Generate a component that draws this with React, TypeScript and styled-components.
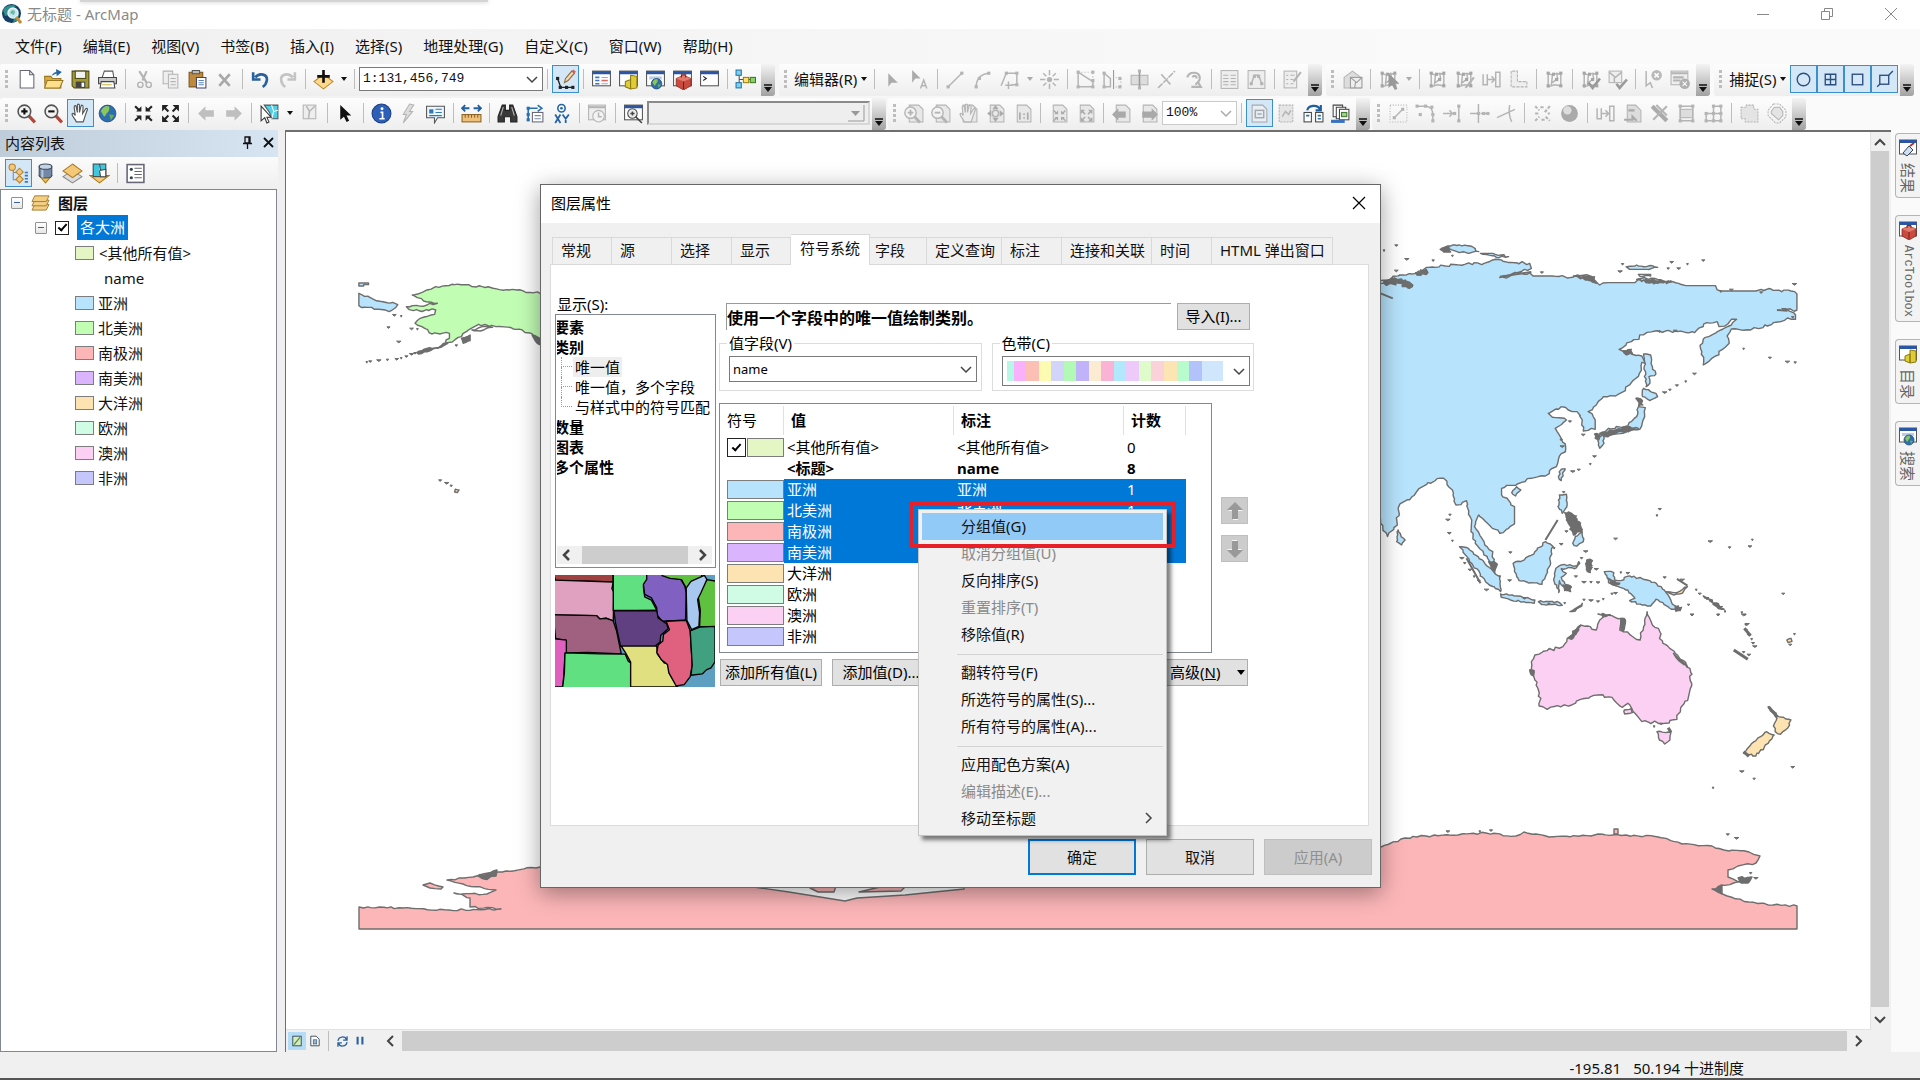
import React from "react";
import styled, { createGlobalStyle, css } from "styled-components";

const UI_FONT = `"Noto Sans", "Noto Sans CJK SC", sans-serif`;
const CJK_FONT = `"Noto Sans CJK SC", sans-serif`;
const MONO_FONT = `"Liberation Mono", "Noto Sans CJK SC", monospace`;

const C = {
  face: "#f0f0f0",
  edge: "#828790",
  line: "#dcdcdc",
  select: "#0078d7",
  text: "#111111",
  coast: "#6e6e6e",
  asia: "#b7e3fc",
  namerica: "#c2fdb4",
  antarctica: "#fcb6b8",
  samerica: "#dab4fc",
  oceania: "#fce3b1",
  europe: "#d0fce5",
  australia: "#fcd0f2",
  africa: "#c4c6fc",
  other: "#e3f6c3",
};

const GlobalStyle = createGlobalStyle`
  *, *::before, *::after { box-sizing: border-box; }
  body { margin: 0; background: ${C.face}; }
  button, input, select { font: inherit; color: inherit; margin: 0; }
  ul { list-style: none; margin: 0; padding: 0; }
`;

/* ---------- icons ---------- */

const G = "#b4b4b4";
const g = { stroke: G, fill: "none", strokeWidth: 1.4 };
const node = (pts: number[][], color = G) =>
  pts.map(([x, y], i) => <rect key={i} x={x - 1.5} y={y - 1.5} width="3" height="3" fill={color} stroke="none" />);
const page = (
  <path d="M5 2h9l4 4v12H5z" fill="#e8e8e8" stroke={G} />
);
const win = (
  <>
    <rect x="1.5" y="2" width="17" height="14" fill="#fff" stroke="#555" />
    <rect x="1.5" y="2" width="17" height="3" fill="#2b56a3" />
  </>
);
const lens = (c: string, handle: string, plus: boolean) => (
  <>
    <path d="M12 12l6 6.5" stroke={handle} strokeWidth="3" />
    <circle cx="8" cy="8" r="6" fill="#f3f3f3" stroke={c} strokeWidth="1.5" />
    <path d={plus ? "M5 8h6M8 5v6" : "M5 8h6"} stroke={c === G ? G : "#111"} strokeWidth="2" />
  </>
);
const globe = (cx: number, cy: number, r: number) => (
  <>
    <circle cx={cx} cy={cy} r={r} fill="#2c6fae" stroke="#274e78" strokeWidth=".8" />
    <path
      d={`M${cx - r * 0.8} ${cy - r * 0.3}q${r * 0.5} ${-r * 0.8} ${r} ${-r * 0.5}q${r * 0.1} ${r * 0.5} ${-r * 0.3} ${r * 0.8}q${-r * 0.3} ${r * 0.6} ${-r * 0.4} ${r * 0.2}z`}
      fill="#8cc65a"
    />
    <path d={`M${cx + r * 0.2} ${cy + r * 0.1}l${r * 0.6} ${r * 0.1}l${-r * 0.4} ${r * 0.6}z`} fill="#6fb04a" />
  </>
);
const hand = (c: string, f: string) => (
  <path
    d="M6 18c-1-3-4-5-4-7s2-1 3 1L4 4c0-2 2-2 2 0l1 5V2.500c0-2 2-2 2 0V9l1.500-6c.5-1.500 2-1 2 .5L12 10l3-4.500c1-1 2 0 1.500 1L14.500 12c-1 3-1 4-2 6z"
    fill={f}
    stroke={c}
    strokeWidth="1.100"
  />
);
const arrowsIn = (c: string) => (
  <g fill={c} stroke={c}>
    <path d="M2 3l4 4M18 3l-4 4M2 17l4-4M18 17l-4-4" strokeWidth="2" />
    <path d="M8 3v5H3zM12 3v5h5zM8 17v-5H3zM12 17v-5h5z" stroke="none" />
  </g>
);
const arrowsOut = (c: string) => (
  <g fill={c} stroke={c}>
    <path d="M4 4l4 4M16 4l-4 4M4 16l4-4M16 16l-4-4" strokeWidth="2" />
    <path d="M2 2h6L2 8zM18 2h-6l6 6zM2 18h6l-6-6zM18 18h-6l6-6z" stroke="none" />
  </g>
);
const cursor = (c: string, x = 0, y = 0) => (
  <path transform={`translate(${x} ${y})`} d="M5 2v14l3.500-3 2.500 5 2.500-1.200L11 12h4.500z" fill={c} />
);
const poly = (
  <>
    <path d="M4 4l4 2 4-2 4 1v11l-6-1-6 2zM8 6l-1 10M12 4l1 5-5 4" {...g} />
    {node([[4, 4], [16, 4], [4, 16], [16, 16], [9, 5], [12, 10]], "#a6a6a6")}
  </>
);

const ICONS: Record<string, React.ReactNode> = {
  new: <path d="M4 1.500h9l4 4V18H4zM13 1.500v4h4" fill="#fff" stroke="#667" />,
  open: (
    <>
      <path d="M1.500 7h6l1.500 2h8v9h-15z" fill="#d9a93b" stroke="#9a7722" />
      <path d="M4 11h15l-3 7H1.500z" fill="#ffe08a" stroke="#9a7722" />
      <path d="M9 6c1-2 3-3 6-3M13 1l4 2-3.500 3z" stroke="#2464a4" fill="#2464a4" />
    </>
  ),
  save: (
    <>
      <path d="M2 2h16v16H4l-2-2z" fill="#a39a35" stroke="#4c4817" />
      <rect x="5" y="2" width="10" height="7" fill="#f2f2f2" stroke="#4c4817" />
      <rect x="5.500" y="12" width="9" height="6" fill="#444" />
      <rect x="11" y="13" width="2.500" height="4" fill="#fff" />
    </>
  ),
  print: (
    <>
      <path d="M5 8l2-6h8l1 6" fill="#fff" stroke="#555" />
      <path d="M1.500 8h17v6h-17z" fill="#c9c9c9" stroke="#444" />
      <path d="M4 12h12l1 6H3z" fill="#fff" stroke="#444" />
      <path d="M5 15h9" stroke="#cdb53f" />
    </>
  ),
  cut: <g {...g}><path d="M6 2l7 11M13 2L9 11" strokeWidth="2" /><circle cx="7" cy="15" r="2.500" /><circle cx="15" cy="15" r="2.500" /></g>,
  copy: <><path d="M3 2h9v12H3z" fill="#eee" stroke={G} /><path d="M8 5h9v13H8zM10 9h5M10 12h5M10 15h5" fill="#eee" stroke={G} /></>,
  paste: (
    <>
      <path d="M2 3h13v14H2z" fill="#c08a3e" stroke="#7a5520" />
      <path d="M5 1.500h7v3H5z" fill="#bbb" stroke="#555" />
      <path d="M9 8h9v10H9z" fill="#fff" stroke="#446" />
      <path d="M11 11h5M11 13h5M11 15h5" stroke="#5a87c4" />
    </>
  ),
  del: <path d="M5 5l10 11M15 5L5 16" stroke="#a9a9a9" strokeWidth="2.500" />,
  undo: <path d="M5 8c4-5 12-3 11 3-.5 3-2 5-4 6M3 3v7h7" stroke="#2a609c" strokeWidth="2.500" fill="none" />,
  redo: <path d="M15 8C11 3 3 5 4 11c.5 3 2 5 4 6M17 3v7h-7" stroke="#c4c4c4" strokeWidth="2.500" fill="none" />,
  add: (
    <>
      <path d="M10 5l9 7-9 7-9-7z" fill="#ffd98a" stroke="#b98a33" />
      <path d="M10 1v12M4 7h12" stroke="#111" strokeWidth="2.500" />
    </>
  ),
  sketch: (
    <>
      <path d="M2.500 9l3 8.500h11" stroke="#222" strokeWidth="1.300" fill="none" />
      {node([[2.500, 9], [5, 17.500], [11, 17.500], [17, 17.500]], "#222")}
      <path d="M9 13l1-4 6-7 2.500 2-6 7z" fill="#f1d7b3" stroke="#8c6a3c" />
      <path d="M16 2l1.500-1.500L20 2.500 18.500 4z" fill="#d86060" />
    </>
  ),
  table: <>{win}<path d="M4 8h4M4 11h4M4 14h4" stroke="#3a76c6" strokeWidth="1.500" /><path d="M10 8h6M10 14h6" stroke="#9ab" /><path d="M10 11h6" stroke="#d66" strokeWidth="1.500" /></>,
  catalog: <>{win}<path d="M7 12l5-2v9l-5-2zM12 6l6 1v11l-6 1z" fill="#e0cc34" stroke="#8a7a12" /></>,
  search: <>{win}<rect x="4" y="7" width="12" height="3" fill="#b9cde8" />{globe(11, 14, 5)}</>,
  toolbox: <>{win}<path d="M4 9l7-3 7 3v7l-7 4-7-4z" fill="#c94a3e" stroke="#7d1d17" strokeWidth=".7" /><path d="M4 9l7 3 7-3-7-3z" fill="#e27a6c" /><path d="M11 12v7M9 8V5.500h4V8" stroke="#7d1d17" fill="none" /></>,
  python: <>{win}<path d="M4 7l3 2-3 2" stroke="#222" fill="none" /></>,
  model: (
    <>
      <path d="M4 4v12M4 10h11" stroke="#555" />
      <rect x="1" y="1" width="5" height="5" fill="#7fd0f0" stroke="#1e76a8" />
      <rect x="1" y="13" width="5" height="5" fill="#7fd0f0" stroke="#1e76a8" />
      <rect x="8" y="8" width="5" height="5" fill="#ffe16a" stroke="#97801b" />
      <rect x="14.500" y="8" width="5" height="5" fill="#8bd16b" stroke="#3b7b20" />
    </>
  ),
  play: <path d="M6 4v13l3-4h6z" fill="#ababab" />,
  playA: <><path d="M3 1v12l3-4h5z" fill="#ababab" /><path d="M11 18.500l3-8 3 8M12 16h4" {...g} /></>,
  lineSeg: <><path d="M3 17L16 4" {...g} />{node([[3, 17], [16, 4]])}</>,
  arc: <><path d="M4 17C4 9 8 5 16 4" {...g} />{node([[4, 17], [7, 9], [16, 4]])}</>,
  trace: <><path d="M2 16l5-12h10v11H12" {...g} /><path d="M9 12v7M6 15.500h7" {...g} />{node([[7, 4], [17, 4], [17, 15]])}</>,
  burst: <><path d="M10 1v5M10 14v5M1 10h5M14 10h5M4 4l3 3M13 13l3 3M16 4l-3 3M7 13l-3 3" {...g} /><circle cx="10" cy="10" r="2.500" fill={G} /></>,
  reshape: <><path d="M3 3h14v14" stroke={G} strokeDasharray="1 2" fill="none" /><path d="M3 3v14h14v-5L3 3" {...g} />{node([[3, 3], [3, 17], [17, 17], [17, 11], [17, 3]])}</>,
  cutPoly: <><path d="M2 4v13h6V9L2 4" {...g} /><path d="M11 1v18" stroke="#999" /><path d="M13 8h5v9h-5" stroke={G} strokeDasharray="1 2" fill="none" />{node([[2, 4], [2, 17], [17, 9], [17, 17]])}</>,
  split: <><rect x="2" y="6" width="16" height="9" fill="#ddd" stroke={G} /><path d="M10 1v18" stroke="#999" strokeWidth="1.500" />{node([[10, 2], [10, 18]])}</>,
  splitX: <path d="M2 18L18 2M5 5l9 10" stroke={G} strokeWidth="1.500" strokeDasharray="6 1" />,
  rotate: <path d="M4 8c2-6 12-6 12 1 0 3-3 4-4 6M9 8c1-2 4-2 4 1M8 17h9l-3-5" stroke={G} strokeWidth="2" fill="none" />,
  attrs: <><rect x="2" y="1.500" width="16" height="17" fill="#eee" stroke={G} /><path d="M4 6h5M4 9h5M4 12h5M4 15h5M11 6h5M11 9h5M11 12h5M11 15h5" stroke={G} /></>,
  props: <><rect x="2" y="1.500" width="16" height="17" fill="#eee" stroke={G} /><path d="M5 14l3-8h4l3 8" {...g} />{node([[5, 14], [8, 7], [12, 7], [15, 14]])}</>,
  form: <><rect x="2" y="2" width="12" height="16" fill="#eee" stroke={G} /><path d="M4 6h2M4 10h2M4 14h2M8 6h4M8 10h3M8 14h3" stroke={G} /><path d="M18 3l-7 9" stroke={G} strokeWidth="2" /></>,
  building: <><path d="M2 8l8-6 8 6v10H2z" fill="#ddd" stroke={G} /><rect x="8" y="8" width="11" height="10" fill="#eee" stroke="#999" /><path d="M8 8l6 5 5-5M13 12l-1 6" stroke="#999" fill="none" /></>,
  polyCursor: <>{poly}{cursor("#999", 5, 2)}</>,
  poly,
  polyEdit: <>{poly}<path d="M19 8l-8 10" stroke={G} strokeWidth="2" /></>,
  align: <><path d="M2 5v10h4V5M14 3h4v14h-4z" {...g} /><path d="M6 10h7M10 7l3 3-3 3" {...g} /></>,
  steps: <><path d="M3 2v15h15v-5H9V2z" fill="#eee" stroke={G} strokeDasharray="3 1" /></>,
  polyCheck: <>{poly}<path d="M8 13l4 5 7-9" stroke="#9a9a9a" strokeWidth="2.500" fill="none" /></>,
  boxCheck: <><rect x="2" y="2" width="12" height="11" fill="#eee" stroke={G} /><path d="M2 3l6 5 6-5M7 8v5" {...g} /><path d="M9 14l3 4 7-8" stroke="#9a9a9a" strokeWidth="2.500" fill="none" /></>,
  cursorX: <><path d="M3 2v14l4-3 2 5" {...g} /><circle cx="13" cy="6" r="5" fill="#b9b9b9" /><path d="M11 4l4 4M15 4l-4 4" stroke="#fff" strokeWidth="1.500" /></>,
  listX: <><rect x="1" y="2" width="16" height="13" fill="#eee" stroke={G} /><path d="M1 4h16M3 8h10M3 11h7" stroke={G} strokeWidth="2" /><circle cx="14" cy="14" r="5" fill="#b0b0b0" /><path d="M12 12l4 4M16 12l-4 4" stroke="#fff" /></>,
  zoomIn: lens("#555", "#b0483a", true),
  zoomOut: lens("#555", "#b0483a", false),
  hand: hand("#555", "#fff"),
  globe: globe(10, 10, 8),
  arrowsIn: arrowsIn("#222"),
  arrowsOut: arrowsOut("#222"),
  back: <path d="M2 10l7-7v4h8v6H9v4z" fill="#bfbfbf" />,
  fwd: <path d="M18 10l-7-7v4H3v6h8v4z" fill="#bfbfbf" />,
  selFeat: <><path d="M5 2h13v13h-6l-2-6z" fill="#4fd0e6" stroke="#555" /><path d="M12 2l2 6 4-1M12 15l2-7" stroke="#fff" fill="none" /><path d="M2 3v14l3.500-3 2 5 2-1-2-4.500h4z" fill="#fff" stroke="#333" /></>,
  clearSel: <><rect x="4" y="2" width="12" height="13" fill="#eee" stroke={G} /><path d="M7 3l3 5 5-5M10 8l-1 7" {...g} /></>,
  cursor: cursor("#111"),
  info: <><circle cx="10" cy="10" r="9" fill="#2d5fb8" stroke="#1d3f80" /><path d="M9 9h2v6M8 15h5" stroke="#fff" strokeWidth="1.600" fill="none" /><circle cx="10.500" cy="5.500" r="1.400" fill="#fff" /></>,
  flash: <path d="M11 1l4 1-4 6h3L5 19l3-8H5z" fill="#ddd" stroke={G} />,
  popup: <><path d="M1.500 3h17v11H12l-3 5v-5H1.500z" fill="#eef6fd" stroke="#555" /><rect x="4" y="6" width="4" height="4" fill="#2f77b6" /><path d="M10 6h6M10 9h6M4 12h12" stroke="#2f77b6" /></>,
  measure: <><rect x="1" y="11" width="18" height="7" fill="#f0c07a" stroke="#8a6325" /><path d="M4 11v3M7 11v3M10 11v3M13 11v3M16 11v3" stroke="#8a6325" /><path d="M2 5h6M12 5h6M4 2L1 5l3 3M16 2l3 3-3 3" stroke="#1f5fa0" strokeWidth="1.700" fill="none" /></>,
  find: <><path d="M5 2h3v5h4V2h3l4 11v5h-6v-5H7v5H1v-5z" fill="#3a3a3a" stroke="#222" /><path d="M3.500 12L6 4M16.500 12L14 4" stroke="#bbb" /></>,
  route: <><rect x="8" y="9" width="10" height="9" fill="#fff" stroke="#667" /><path d="M10 12h6M10 15h6" stroke="#78a" /><path d="M4 16V5h9M13 2l4 3-4 3" stroke="#2970b0" fill="none" strokeWidth="1.500" />{node([[4, 5], [4, 11], [4, 16]], "#2970b0")}</>,
  xy: <><circle cx="10" cy="5" r="3.500" fill="none" stroke="#2463a5" strokeWidth="1.500" /><circle cx="10" cy="5" r="1.300" fill="#2463a5" /><path d="M4 11l5 8M9 11l-5 8M11 11l3 4 3-4M14 15v4" stroke="#2463a5" strokeWidth="1.700" fill="none" /></>,
  time: <><rect x="1.500" y="2" width="16" height="14" fill="#eee" stroke={G} /><path d="M1.500 4h16" stroke={G} strokeWidth="2" /><circle cx="11" cy="12.500" r="5.500" fill="#f3f3f3" stroke={G} /><path d="M11 9v4h3" {...g} /></>,
  viewer: <>{win}<circle cx="9" cy="10" r="4.500" fill="#eee" stroke="#444" /><path d="M7 10h4M9 8v4M12 13l6 6" stroke="#444" strokeWidth="1.500" /></>,
  pzIn: <>{page}<g transform="translate(-1 2) scale(.9)">{lens(G, G, true)}</g></>,
  pzOut: <>{page}<g transform="translate(-1 2) scale(.9)">{lens(G, G, false)}</g></>,
  pHand: <>{page}{hand(G, "#eee")}</>,
  pFull: <>{page}<path d="M10 2l3 4H7zM10 18l3-4H7zM2 10l4-3v6zM18 10l-4-3v6z" fill="#aaa" /><circle cx="10" cy="10" r="3" {...g} /></>,
  pOne: <>{page}<path d="M7.500 9v7M15 9v7M11.500 10v1.500M11.500 13.500V15" stroke="#aaa" strokeWidth="1.600" /></>,
  pIn: <>{page}<g transform="translate(4 5) scale(.7)">{arrowsIn("#aaa")}</g></>,
  pOut: <>{page}<g transform="translate(4 5) scale(.7)">{arrowsOut("#aaa")}</g></>,
  pBack: <>{page}<path d="M1 11l6-6v3h7v6H7v3z" fill="#a9a9a9" /></>,
  pFwd: <>{page}<path d="M19 11l-6-6v3H4v6h9v3z" fill="#a9a9a9" /></>,
  draft: <><path d="M3 2h10l4 4v12H3z" fill="#e8eef3" stroke="#a4a9ad" /><rect x="6" y="7" width="8" height="7" stroke="#a4a9ad" strokeWidth="1.400" /><path d="M8 10.500h4" stroke="#a4a9ad" strokeWidth="1.400" /></>,
  pFocus: <><rect x="3" y="2" width="13" height="16" fill="#e5e5e5" stroke={G} strokeDasharray="2 1" /><path d="M6 13l3-5 3 3 2-4" {...g} /></>,
  swap: <><rect x="1" y="9" width="7" height="9" fill="#fff" stroke="#444" /><rect x="12" y="9" width="7" height="9" fill="#fff" stroke="#444" /><path d="M3 12h3M14 12h3M14 15h3" stroke="#2970b0" strokeWidth="1.500" /><path d="M4 7c1-5 10-6 12-1M17 2v5h-5" stroke="#1f5fa0" strokeWidth="2" fill="none" /></>,
  pages: <><path d="M3 2h9v11H3z" fill="#fff" stroke="#444" /><path d="M6 4h9v11H6z" fill="#fff" stroke="#444" /><rect x="9" y="6" width="9" height="10" fill="#fff" stroke="#444" /><rect x="11" y="9" width="5" height="4" fill="#9fd08a" stroke="#3c7a2c" /><path d="M1 16h13v3H1z" fill="#3a72c0" /></>,
  eBox: <><rect x="2" y="2" width="16" height="16" stroke={G} strokeDasharray="1 1.500" fill="none" /><path d="M6 14l8-8" {...g} />{node([[6, 14], [14, 6]])}</>,
  eCurve: <><path d="M2 3h8M10 3c5 0 7 4 7 8v7" {...g} />{node([[2, 3], [10, 3], [16, 4], [17, 11], [17, 17], [5, 11]])}</>,
  eExtend: <><path d="M1 10h9M7 7l3 3-3 3M16 2v16" {...g} />{node([[12, 10], [16, 3], [16, 17]])}</>,
  eTrim: <><path d="M9 1v18M1 10h8M11 10h8" {...g} />{node([[9, 10], [14, 10], [18, 10]])}</>,
  eCross: <path d="M1 14l17-8M13 2c-1 6-1 10 2 16" {...g} />,
  eExplode: <><path d="M3 3l4 4M17 3l-5 6M3 17l4-4M13 13l4 4M8 4h3M3 10h3M15 10h2M9 16h3" stroke={G} strokeDasharray="3 1.500" strokeWidth="2" /></>,
  eBall: <><circle cx="10" cy="10" r="8" fill="#aaa" /><circle cx="8" cy="7" r="4" fill="#ddd" /></>,
  ePage: <><path d="M5 2h8l5 5v11H5z" fill="#ddd" stroke={G} /><path d="M2 16h8v-3l4 4M12 7H6" stroke="#aaa" strokeWidth="2" fill="none" /></>,
  eWrench: <><path d="M3 3l14 14" stroke="#aaa" strokeWidth="4" /><path d="M17 3L4 16M7 2l10 10" stroke="#b4b4b4" strokeWidth="2" /></>,
  eBand: <><rect x="4" y="6" width="12" height="8" fill="#ddd" stroke={G} /><path d="M4 2v16M16 2v16M4 3h12M4 17h12" {...g} />{node([[4, 3], [16, 3], [4, 17], [16, 17]])}</>,
  eGrid: <><path d="M10 2v16M17 2v16M10 3h7M2 10h15M2 17h15M3 10v7" {...g} />{node([[10, 3], [17, 3], [3, 10], [10, 10], [17, 10], [3, 17], [10, 17], [17, 17]])}</>,
  eUnion: <path d="M2 4h5V2h7v4h4v12H6v-3H2z" fill="#e4e4e4" stroke={G} strokeDasharray="2 1" />,
  eBuffer: <><path d="M7 1h6l6 6v6l-6 6H9l-7-7V7z" stroke={G} strokeDasharray="2 1" fill="none" /><path d="M8 4h5l3 4v4l-4 4-7-6V8z" fill="#e4e4e4" stroke={G} /></>,
  snapPoint: <circle cx="10" cy="10" r="6" fill="none" stroke="#2c4f82" strokeWidth="1.300" />,
  snapEnd: <path d="M5 5h10v10H5zM5 10h10M10 5v10" fill="none" stroke="#2c4f82" strokeWidth="1.300" />,
  snapVertex: <rect x="5" y="5" width="10" height="10" fill="none" stroke="#2c4f82" strokeWidth="1.300" />,
  snapEdge: <><path d="M3 17l3-3M14 6l4-4" stroke="#2c4f82" strokeWidth="1.300" /><rect x="5.500" y="6" width="8.500" height="8.500" fill="none" stroke="#2c4f82" strokeWidth="1.300" /></>,
  tocOrder: (
    <>
      <path d="M5 7v9h6M5 9h6" stroke="#889" fill="none" />
      <circle cx="4" cy="4" r="3" fill="#f3c87e" stroke="#b5812c" />
      <path d="M11 5l3.500 3.500L11 12 7.500 8.500zM11 12l3.500 3.500L11 19l-3.500-3.500z" fill="#f3c87e" stroke="#b5812c" />
      <path d="M16 9h3M16 12h3M16 15h3M16 18h3" stroke="#357ac0" strokeWidth="1.500" />
    </>
  ),
  tocSource: <><path d="M4 12h12l-6 7z" fill="#f4c24e" stroke="#a87b1c" /><path d="M4 3v9c0 3 12 3 12 0V3z" fill="#7288a6" stroke="#3d4d63" /><path d="M6 5v9h2V5z" fill="#b9c7da" /><ellipse cx="10" cy="3.500" rx="6" ry="2.500" fill="#c5d2e2" stroke="#3d4d63" /></>,
  tocVisible: <><path d="M10 7l9 6-9 6-9-6z" fill="#ddd" stroke="#888" /><path d="M10 1l9 6.500-9 6.500-9-6.500z" fill="#f4c878" stroke="#a87b1c" /></>,
  tocSelect: <><path d="M1 12h18l-9 7z" fill="#f4c878" stroke="#a87b1c" /><rect x="4" y="1" width="12" height="12" fill="#3ec8e0" stroke="#444" /><path d="M10 1l1 6 5-1v7h-5l-1-6" fill="#fff" stroke="#444" /></>,
  tocOptions: <><rect x="2" y="1.500" width="16" height="17" fill="#fff" stroke="#667" strokeWidth="1.500" /><path d="M9 5h7M9 8h7M9 14h7M9 11h7" stroke="#667" /><circle cx="6" cy="6" r="1.500" fill="#345" /><circle cx="6" cy="14" r="1.500" fill="#345" /></>,
  layers: <g fill="#f3cf85" stroke="#a77c2c"><path d="M4 12h15l-3 6H1z" /><path d="M4 7.500h15l-3 6H1z" /><path d="M4 3h15l-3 6H1z" /></g>,
  results: <>{win}<path d="M5 15l6-7 4 4-6 6z" fill="#cfe0f5" stroke="#345" /><path d="M12 8l4-3" stroke="#a33" strokeWidth="2" /></>,
  logo: (
    <>
      <circle cx="9.500" cy="9.500" r="9.500" fill="#123f63" />
      <path d="M1 6c3-5 9-6 13-4l-4 3-3 6-4 1zM12 14l5-4-1 6-5 3z" fill="#2f8f8b" />
      <circle cx="11" cy="9" r="5" fill="#bfe6f2" stroke="#e9f3f5" strokeWidth="1.500" />
      <path d="M8 9l2-3 3 1-1 4z" fill="#6db7a0" />
      <path d="M14 13l5 6" stroke="#c98c35" strokeWidth="3" />
    </>
  ),
  dataView: <><rect x="3" y="2" width="14" height="16" fill="#d6ecc0" stroke="#345" strokeWidth="1.500" /><path d="M5 16L15 4" stroke="#4a8a3a" strokeWidth="2" /></>,
  layoutView: <><path d="M3 2h9l5 5v11H3z" fill="#fff" stroke="#345" strokeWidth="1.500" /><rect x="7" y="8" width="6" height="7" fill="#8fb5dc" stroke="#345" /></>,
  refresh: <path d="M3 9c1-7 11-8 13-2M17 2v6h-6M17 11c-1 7-11 8-13 2M3 18v-6h6" stroke="#2a609c" strokeWidth="2" fill="none" />,
  pause: <path d="M6 3v13M14 3v13" stroke="#2a609c" strokeWidth="3.500" />,
};

const Svg = styled.svg<{ $s: number }>`
  display: block;
  flex: none;
  width: ${(p) => p.$s}px;
  height: ${(p) => p.$s}px;
  fill: none;
`;
const Icon = ({ name, size = 21 }: { name: string; size?: number }) => (
  <Svg $s={size} viewBox="0 0 20 20" aria-hidden="true">{ICONS[name]}</Svg>
);
const Chevron = ({ dir = "down", size = 12, width = 1.5, color = "#444" }: { dir?: string; size?: number; width?: number; color?: string }) => {
  const d: Record<string, string> = { down: "M1 4l5 5 5-5", up: "M1 8l5-5 5 5", left: "M8 1L3 6l5 5", right: "M4 1l5 5-5 5" };
  return <Svg $s={size} viewBox="0 0 12 12" aria-hidden="true"><path d={d[dir]} stroke={color} strokeWidth={width} /></Svg>;
};

/* ---------- window frame ---------- */

const Window = styled.div`
  position: relative;
  display: flex;
  flex-direction: column;
  height: 100vh;
  overflow: hidden;
  background: linear-gradient(90deg, #f0f0f0, #fafafa 75%);
  color: ${C.text};
  font: 15px/20px ${UI_FONT};
`;
const TitleBar = styled.header`
  display: flex;
  align-items: center;
  height: 29px;
  padding: 0 0 2px 2px;
  gap: 5px;
  background: #fff;
  color: #8a8a8a;
`;
const HiddenEdge = styled.div`
  position: absolute;
  top: 0;
  left: 80px;
  width: 408px;
  height: 2px;
  background: #d4d4d4;
  box-shadow: 0 0 4px #bbb;
`;
const WindowTitle = styled.h1`
  flex: 1;
  margin: 0;
  font: 15px/20px ${UI_FONT};
`;
const CaptionButton = styled.button`
  display: grid;
  place-items: center;
  width: 59px;
  height: 27px;
  padding: 0;
  border: 0;
  background: none;
`;
const MenuBar = styled.nav`
  display: flex;
  gap: 1px;
  height: 35px;
  padding: 0 0 2px 5px;
`;
const MenuEntry = styled.button`
  padding: 0 10px;
  border: 0;
  background: none;
  white-space: nowrap;
`;

/* ---------- toolbars ---------- */

const ToolRow = styled.div`
  display: flex;
  gap: 4px;
  height: 32px;
  margin-bottom: 2px;
`;
const ToolRowLast = styled(ToolRow)`
  gap: 2px;
  margin-bottom: 0;
`;
const Bar = styled.div`
  display: flex;
  flex: none;
  align-items: center;
  height: 32px;
  padding-bottom: 2px;
  border-radius: 3px;
  background: linear-gradient(#fdfdfd, #eeeeee);
`;
const Grip = styled.span`
  width: 3px;
  height: 18px;
  margin: 0 5px;
  background: repeating-linear-gradient(#bdbdbd 0 3px, transparent 3px 5px);
`;
const ToolButton = styled.button<{ $on?: boolean }>`
  display: grid;
  place-items: center;
  flex: none;
  width: 27px;
  height: 28px;
  padding: 0;
  border: 1px solid transparent;
  background: none;
  ${(p) => p.$on && css`
    border-color: #3c8fc9;
    background: #d3e7f6;
  `}
`;
const Sep = styled.span`
  flex: none;
  width: 1px;
  height: 20px;
  margin: 0 4px;
  background: #bdbdbd;
`;
const DropArrow = styled.button<{ $dim?: boolean }>`
  flex: none;
  width: 13px;
  height: 28px;
  padding: 0;
  border: 0;
  background: none;
  &::after {
    content: "";
    display: block;
    width: 0;
    margin: 0 auto;
    border: 3px solid transparent;
    border-top: 4px solid ${(p) => (p.$dim ? "#aaa" : "#111")};
    border-bottom: 0;
  }
`;
const BarMenu = styled.button`
  padding: 0 0 0 2px;
  border: 0;
  background: none;
  white-space: nowrap;
`;
const Overflow = styled.button`
  display: grid;
  place-items: end center;
  width: 14px;
  height: 32px;
  margin: 0 0 -2px 2px;
  padding: 0 0 4px;
  border: 0;
  border-radius: 0 3px 3px 0;
  background: linear-gradient(#f4f4f4, #a2a2a2);
`;
const OverflowGlyph = () => (
  <Overflow aria-label="工具条选项">
    <svg width="8" height="8" viewBox="0 0 8 8"><path d="M0 1h8" stroke="#111" strokeWidth="1.500" /><path d="M0 3h8L4 8z" fill="#111" /></svg>
  </Overflow>
);

const ComboBox = styled.div<{ $w: number; $h: number }>`
  display: grid;
  flex: none;
  align-items: center;
  width: ${(p) => p.$w}px;
  height: ${(p) => p.$h}px;
  > * { grid-area: 1 / 1; }
  > svg { justify-self: end; margin-right: 5px; pointer-events: none; }
`;
const Select = styled.select<{ $mono?: boolean; $tone?: string }>`
  appearance: none;
  width: 100%;
  height: 100%;
  padding: 0 20px 0 3px;
  border: 1px solid ${(p) => p.$tone ?? "#7a7a7a"};
  border-radius: 0;
  background: #fff;
  opacity: 1;
  font: 13px/20px ${(p) => (p.$mono ? MONO_FONT : UI_FONT)};
`;
const SunkenSelect = styled(Select)`
  border-width: 2px;
  border-color: #8a8a8a #d8d8d8 #d8d8d8 #8a8a8a;
  background: #eeeeee;
`;

const Tools = ({ items, active = [] }: { items: string; active?: string[] }) => (
  <>
    {items.split(" ").map((n, i) =>
      n === "|" ? <Sep key={i} /> : n === "v" ? <DropArrow key={i} aria-label="更多" /> : n === "w" ? <DropArrow key={i} $dim aria-label="更多" /> : (
        <ToolButton key={i} $on={active.includes(n)} aria-label={n}><Icon name={n} /></ToolButton>
      )
    )}
  </>
);

/* ---------- contents panel ---------- */

const Main = styled.main`
  display: flex;
  flex: 1;
  min-height: 0;
  background: ${C.face};
`;
const Panel = styled.aside`
  display: flex;
  flex-direction: column;
  width: 278px;
  margin-right: 7px;
`;
const PanelHead = styled.div`
  display: flex;
  align-items: center;
  gap: 7px;
  height: 27px;
  padding: 0 3px 2px 5px;
  background: linear-gradient(90deg, #bfcddb, #d7e5f3);
`;
const PanelTitle = styled.h2`
  flex: 1;
  margin: 0;
  font: 15px/20px ${UI_FONT};
`;
const PlainButton = styled.button`
  display: grid;
  place-items: center;
  width: 14px;
  height: 20px;
  padding: 0;
  border: 0;
  background: none;
`;
const PanelTools = styled.div`
  display: flex;
  align-items: center;
  height: 32px;
  padding-left: 5px;
  background: linear-gradient(#fbfbfb, #efefef);
`;
const Tree = styled.ul`
  flex: 1;
  margin-right: 1px;
  border: 1px solid ${C.edge};
  background: #fff;
`;
const TreeRow = styled.li<{ $indent: number; $gap?: number }>`
  display: flex;
  align-items: center;
  gap: ${(p) => p.$gap ?? 8}px;
  height: 25px;
  padding-left: ${(p) => p.$indent}px;
  white-space: nowrap;
`;
const Fold = styled.button`
  width: 12px;
  height: 12px;
  padding: 0 2px;
  border: 1px solid #919191;
  border-radius: 1px;
  background: linear-gradient(#fff, #e6e6e6);
  &::after { content: ""; display: block; height: 1px; background: #3b5fa8; }
`;
const Check = styled.input<{ $s: number }>`
  appearance: none;
  display: grid;
  flex: none;
  place-items: center;
  width: ${(p) => p.$s}px;
  height: ${(p) => p.$s}px;
  border: 1px solid #222;
  background: #fff;
  &:checked::after {
    content: "";
    width: 5px;
    height: 9px;
    margin-bottom: 3px;
    border: solid #000;
    border-width: 0 2px 2px 0;
    transform: rotate(42deg);
  }
`;
const Swatch = styled.span<{ $c: string; $w: number; $h: number }>`
  display: block;
  flex: none;
  width: ${(p) => p.$w}px;
  height: ${(p) => p.$h}px;
  border: 1px solid #7d7d7d;
  background: ${(p) => p.$c};
`;
const Strong = styled.strong`
  font-weight: 700;
`;
const Picked = styled.label`
  padding: 2px 3px 3px;
  background: ${C.select};
  color: #fff;
`;

const CONTINENTS: [string, string][] = [
  ["亚洲", C.asia],
  ["北美洲", C.namerica],
  ["南极洲", C.antarctica],
  ["南美洲", C.samerica],
  ["大洋洲", C.oceania],
  ["欧洲", C.europe],
  ["澳洲", C.australia],
  ["非洲", C.africa],
];

const ContentsPanel = () => (
  <Panel>
    <PanelHead>
      <PanelTitle>内容列表</PanelTitle>
      <PlainButton aria-label="自动隐藏">
        <svg width="11" height="13" viewBox="0 0 11 13"><path d="M3 1h5v6H3zM1 7.500h9M5.500 8v5M7 1v6" stroke="#111" strokeWidth="1.300" fill="none" /></svg>
      </PlainButton>
      <PlainButton aria-label="关闭">
        <svg width="11" height="11" viewBox="0 0 11 11"><path d="M1 1l9 9M10 1l-9 9" stroke="#111" strokeWidth="1.800" /></svg>
      </PlainButton>
    </PanelHead>
    <PanelTools>
      <Tools items="tocOrder tocSource tocVisible tocSelect | tocOptions" active={["tocOrder"]} />
    </PanelTools>
    <Tree>
      <TreeRow $indent={10}><Fold aria-label="折叠" /><Icon name="layers" size={19} /><Strong>图层</Strong></TreeRow>
      <TreeRow $indent={34}>
        <Fold aria-label="折叠" />
        <Check $s={14} type="checkbox" id="layer" defaultChecked />
        <Picked htmlFor="layer">各大洲</Picked>
      </TreeRow>
      <TreeRow $indent={74} $gap={5}><Swatch $c={C.other} $w={19} $h={14} />&lt;其他所有值&gt;</TreeRow>
      <TreeRow $indent={103}>name</TreeRow>
      {CONTINENTS.map(([n, c]) => (
        <TreeRow key={n} $indent={74} $gap={4}><Swatch $c={c} $w={19} $h={14} />{n}</TreeRow>
      ))}
    </Tree>
  </Panel>
);

/* ---------- map ---------- */

/* Breaks each slanted edge of a coarse outline into short wandering steps, so that it reads as a coastline. */
const coast = (pts: string, amp = 4, step = 14) => {
  const p = pts.trim().split(/\s+/).map((s) => s.split(",").map(Number));
  let seed = Math.floor(Math.abs(p.length * 731 + p[0][0] * 17 + p[0][1])) + 1;
  const rnd = () => {
    seed = (seed * 16807) % 2147483647;
    return (seed % 1000) / 1000 - 0.5;
  };
  const out: string[] = [];
  p.forEach(([x, y], i) => {
    const [nx, ny] = p[(i + 1) % p.length];
    const straight = nx === x || ny === y;
    const n = straight ? 1 : Math.max(1, Math.min(60, Math.floor(Math.hypot(nx - x, ny - y) / step)));
    out.push(`${x} ${y}`);
    for (let k = 1; k < n; k++) {
      out.push(`${(x + ((nx - x) * k) / n + rnd() * amp).toFixed(1)} ${(y + ((ny - y) * k) / n + rnd() * amp).toFixed(1)}`);
    }
  });
  return `M${out.join("L")}Z`;
};

const ASIA_MAIN =
  "-100,150 30,152 50,150 85,135 130,130 165,112 215,108 270,103 325,100 350,90 400,97 455,100 460,115 420,128 370,143 400,138 455,128 465,138 520,138 570,143 590,135 625,137 640,150 655,165 680,158 755,158 775,145 820,148 880,160 900,167 985,167 1000,183 1100,183 1115,178 1200,183 1217,192 1217,240 1185,238 1213,255 1213,268 1190,264 1150,278 1108,296 1030,297 1018,318 1024,340 1005,358 985,378 965,395 950,405 942,355 950,328 1000,300 1030,285 1045,268 1030,268 1020,282 995,290 990,275 960,278 925,308 870,303 790,307 745,335 710,358 745,372 775,378 785,400 775,397 768,430 740,465 700,498 665,500 645,525 622,545 642,570 642,598 608,603 605,570 590,545 565,540 545,530 508,550 520,562 560,570 528,595 545,625 558,655 535,700 500,738 460,745 420,762 375,775 375,795 412,830 412,882 370,910 340,885 310,855 298,890 325,935 350,965 352,1000 325,975 300,940 288,905 290,870 275,812 245,825 235,780 210,745 165,758 120,800 82,830 78,885 50,920 30,880 -100,600";
const ASIA_ISLANDS = [
  "80,900 100,930 90,945 76,935",
  "418,770 430,780 415,798 404,788",
  "545,718 556,716 545,752 537,740",
  "540,795 560,793 562,825 548,850 536,830",
  "585,920 605,905 608,935 590,948 578,940",
  "560,850 580,855 590,880 575,890 565,870",
  "780,372 800,375 805,410 815,432 795,440 798,460 787,470",
  "780,475 800,485 815,490 820,500 798,512 777,500",
  "765,530 785,533 783,560 770,597 700,612 665,618 655,612 680,595 725,590 745,575 760,560",
  "650,622 665,615 667,640 655,655",
  "255,950 280,955 320,990 370,1040 372,1085 335,1060 290,1000",
  "372,1092 420,1098 470,1110 468,1120 400,1110 374,1102",
  "480,1115 540,1118 548,1126 490,1124",
  "570,1145 605,1120 604,1128 578,1145",
  "408,1000 440,990 470,965 500,935 522,950 512,985 515,1000 500,1040 490,1063 425,1052 412,1025",
  "530,1015 545,1005 590,1008 595,995 598,1000 588,1014 545,1016 560,1030 545,1042 567,1075 555,1082 540,1052 538,1088 525,1055",
  "668,1025 695,1028 697,1050 715,1052 740,1038 790,1050 830,1070 850,1095 865,1125 885,1138 860,1138 815,1108 800,1128 775,1125 740,1112 755,1105 735,1080 680,1058",
  "205,55 235,45 285,48 310,65 280,70 240,62",
  "315,70 350,70 395,80 360,82",
  "730,110 760,105 820,112 790,118 740,118",
  "765,133 800,133 800,138 770,140",
];
const ASIA_SPECKS =
  "40,62 75,47 105,88 180,92 75,123 235,78 490,128 713,125 720,103 860,97 905,103 950,92 1210,163 850,116 880,116 1065,357 1140,384 1190,396 1212,398 925,432 900,455 875,467 840,488 855,480 640,680 628,703 595,720 578,725 552,787 700,927 818,857 826,838 970,935 1025,953 1083,950 1090,930 1178,1092 222,870 228,855 226,910 235,933 400,968 262,985 270,1000 285,1020 297,1040 310,1053 332,1080 350,1020 398,1052 370,1040 560,905 575,900 590,890 600,900 572,868 585,860 615,965 603,985 545,943 525,955 587,1040 610,1057 630,1057 650,1058 628,1000 630,1015 645,1018 690,1092 700,1090 665,1108 650,1115 630,1112 610,1110 735,1030 715,1028 840,1043 890,1050 908,1125 918,1155 930,1080 940,1092 960,1105 985,1125 1000,1132 1012,1145 993,1155 1065,1155 1072,1185 1030,180 1000,185 1115,188 1180,238 1205,262 870,303 825,305 570,575 548,650 545,630 608,615 555,1120 585,1140 440,1105 510,1122";
const DENSE: string[] = [
  "30,160 60,145 100,150 122,165 112,175 85,160 50,165",
  "200,58 225,50 230,66 210,66",
  "130,128 160,118 165,128 145,136",
  "580,138 640,140 645,160 620,150",
  "722,362 745,358 748,370 730,374",
  "555,848 575,850 600,880 602,905 580,915 572,890 560,870",
  "758,505 772,507 778,525 766,527",
  "550,1065 570,1067 572,1085 560,1082",
  "618,990 634,992 628,1028 620,1025",
  "655,610 700,600 740,590 765,595 700,610 670,620",
  "640,612 655,615 652,630 642,625",
  "338,995 360,1000 356,1030 348,1020",
  "680,1045 712,1060 700,1065 685,1060",
  "870,1130 888,1132 884,1142 872,1144",
  "950,1098 970,1108 1010,1138 990,1132",
  "760,148 800,150 860,156 820,160",
];

const AUS =
  "460,185 470,165 505,152 550,140 570,110 600,75 620,78 645,90 655,60 680,45 720,55 712,90 740,103 770,120 780,80 790,35 805,75 822,85 835,130 870,160 912,205 917,250 908,290 885,330 875,358 840,370 775,365 750,335 735,310 720,322 690,292 650,285 600,298 575,315 535,317 505,328 482,318 487,295 470,240";

const ANTARCTICA =
  "359,929 359,907 403,908 449,910 501,909 470,907 470,898 454,893 487,894 496,890 463,884 447,880 473,877 480,875 498,872 540,867 900,840 1381,847 1405,838 1426,836 1458,835 1486,833 1516,836 1524,832 1549,837 1591,836 1598,834 1626,835 1658,837 1682,844 1712,846 1724,850 1749,852 1760,856 1756,863 1738,866 1728,870 1728,877 1742,882 1721,885 1715,890 1731,897 1749,902 1773,905 1797,906 1797,929";

const Specks = ({ at, r = 2.5 }: { at: string; r?: number }) => (
  <>
    {at.split(" ").map((s, i) => {
      const [x, y] = s.split(",").map(Number);
      const w = r + ((i * 7) % 5);
      return <path key={i} d={`M${x - w} ${y - r}h${w * 2}l${-w} ${r * 2}z`} fill={C.coast} strokeWidth="1" />;
    })}
  </>
);

const MapSvg = styled.svg`
  display: block;
  width: 100%;
  height: 100%;
  stroke: ${C.coast};
  stroke-width: 1.4px;
  stroke-linejoin: round;
  path { vector-effect: non-scaling-stroke; }
`;

const WorldMap = () => (
  <MapSvg viewBox="286 132 1584 897" role="img" aria-label="各大洲">
    <g transform="translate(0 130) scale(.3444 .3333)">
      <path fill={C.asia} d={coast("1042,490 1103,514 1140,517 1155,524 1130,545 1100,538 1060,532 1042,527", 7, 9)} />
      <path fill={C.asia} d="M1042 459h28v5h-14v4h-14z" />
      <path fill={C.namerica} d={coast("1197,495 1240,480 1265,470 1312,463 1400,470 1450,479 1500,480 1568,490 1800,500 1800,700 1568,640 1545,612 1510,598 1440,590 1390,583 1360,600 1340,620 1300,638 1270,655 1305,625 1305,610 1255,612 1225,590 1205,580 1220,565 1262,553 1265,540 1200,542 1180,530 1240,525 1270,520 1230,513", 7, 9)} />
      <path fill={C.coast} d={coast("1340,625 1365,615 1365,632 1345,640", 5, 6)} />
      <path fill="#fff" d={coast("1370,600 1400,590 1430,592 1395,603", 5, 8)} />
      <path fill={C.coast} d={coast("1210,668 1240,655 1280,652 1300,640 1250,662 1215,672", 5, 8)} />
      <path fill={C.coast} d={coast("1545,615 1600,640 1600,660 1560,640", 5, 8)} />
      <path fill={C.oceania} d={coast("1322,1078 1333,1080 1328,1088 1320,1086", 2, 5)} />
      <Specks at="1065,697 1075,695 1100,692 1125,690 1152,688 1165,685 1180,680 1195,673 1205,670 1145,556 1165,559 1128,593 1158,636 1325,647 1195,597 1212,598 1278,1052 1297,1060 1310,1068" />
    </g>
    <g transform="translate(1370 230) scale(.3508 .3333)">
      <path fill={C.asia} d={coast(ASIA_MAIN, 9, 9)} />
      {ASIA_ISLANDS.map((s) => <path key={s} fill={C.asia} d={coast(s, 6, 7)} />)}
      {DENSE.map((s) => <path key={s} fill={C.coast} d={coast(s, 8, 6)} />)}
      <path fill={C.oceania} d={coast("845,1085 875,1088 905,1070 890,1090 865,1095", 4, 8)} />
      <path d="M370 140l90-14M30 190l35 15M500 930l35-60M275 985l40 75M1160 240l30 2M875 1047l30 20M570 895l20 15" fill="none" strokeWidth="2" />
      <Specks at={ASIA_SPECKS} />
    </g>
    <g transform="translate(1370 600) scale(.3508 .3333)">
      <path fill={C.australia} d={coast(AUS, 9, 9)} />
      <path fill={C.australia} d={coast("818,395 858,397 855,420 840,432 825,420", 4, 8)} />
      <path fill={C.australia} d={coast("725,330 745,325 748,338 726,342", 4, 6)} />
      <path fill={C.coast} d={coast("566,115 600,78 595,90 575,118", 6, 6)} />
      <path fill={C.coast} d={coast("715,55 728,60 722,95 714,85", 6, 6)} />
      <path fill={C.coast} d={coast("650,42 685,44 665,50", 5, 6)} />
      <path fill={C.coast} d={coast("865,160 885,178 905,200 880,182", 5, 6)} />
      <path fill={C.coast} d={coast("455,210 468,212 466,228 460,225", 4, 6)} />
      <path fill={C.oceania} d={coast("1135,320 1165,350 1200,360 1190,385 1170,403 1155,395 1150,378 1160,355", 6, 7)} />
      <path fill={C.oceania} d={coast("1130,395 1152,405 1135,430 1100,468 1065,460 1085,435", 7, 7)} />
      <path fill={C.oceania} d={coast("1188,120 1200,115 1203,124 1192,128", 3, 6)} />
      <path d="M1136 320l26 32M1065 455l15 14M1037 150l40 28M1067 85l18 22M850 383l8 14" fill="none" strokeWidth="3" />
      <Specks at="1060,38 1068,45 1075,73 1072,90 1080,105 1088,118 1092,130 1097,140 1065,157 1080,165 1210,103 1198,135 1060,515 1095,537 1205,502 978,564 1020,704 1045,715 992,45 918,45 810,380 830,372 1100,835 1085,820 222,695 313,695 345,692" />
    </g>
    <path fill={C.antarctica} d={coast(ANTARCTICA, 2, 4)} />
    <path fill="#fff" d="M754 887l35 5 56 9 12-3 48-3 59-6v-6H754z" />
    <path fill={C.antarctica} d="M810 888l8 4h16l2-6h-10zM859 892l25-6h22l-5 5z" />
    <path fill={C.antarctica} d={coast("423,885 430,883 443,887 441,889 430,888", 1, 4)} />
    <path fill={C.coast} d={coast("478,876 497,870 496,876 484,879", 3, 3)} />
    <path fill={C.coast} d={coast("1738,878 1752,877 1748,883 1741,883", 3, 3)} />
    <path fill={C.coast} d={coast("1712,889 1722,886 1722,894", 2, 3)} />
    <path fill={C.antarctica} d="M1614 829h4v5h-4z" />
  </MapSvg>
);

const MapPane = styled.section`
  display: grid;
  grid-template: minmax(0, 1fr) 22px / minmax(0, 1fr) 20px;
  flex: 1;
  min-width: 0;
  border: solid #6f6f6f;
  border-width: 2px 0 0 1px;
`;
const MapCanvas = styled.div`
  min-height: 0;
  border: 1px solid #e2e2e2;
  border-width: 0 1px 1px 0;
  background: #fff;
`;
const VScroll = styled.div`
  display: flex;
  flex-direction: column;
  align-items: center;
  justify-content: space-between;
  margin: 0 2px 0 0;
  padding: 5px 0;
`;
const HScroll = styled.div`
  display: flex;
  align-items: center;
  gap: 5px;
  padding: 1px 7px 1px 2px;
`;
const Thumb = styled.div<{ $v?: boolean }>`
  flex: 1;
  background: #cdcdcd;
  ${(p) => (p.$v ? css`width: 100%; margin: 2px 0 6px;` : css`height: 100%;`)}
`;
const ViewButton = styled.button<{ $on?: boolean }>`
  display: grid;
  place-items: center;
  width: 18px;
  height: 18px;
  padding: 0;
  border: 0;
  background: ${(p) => (p.$on ? "#b5dcf7" : "none")};
`;
const ViewButtons = styled.div`
  display: flex;
  align-items: center;
  margin-right: 11px;
`;

/* ---------- right dock ---------- */

const Dock = styled.aside`
  display: flex;
  flex-direction: column;
  gap: 17px;
  width: 29px;
  padding: 3px 0 0 4px;
  background: #fafafa;
`;
const DockTab = styled.button<{ $mono?: boolean }>`
  display: flex;
  align-items: center;
  gap: 5px;
  min-height: 65px;
  padding: 4px 0;
  border: 1px solid #b5b5b5;
  border-right: 0;
  border-radius: 4px 0 0 4px;
  background: #f3f3f3;
  color: #666;
  writing-mode: vertical-rl;
  text-orientation: sideways;
  white-space: nowrap;
  font: ${(p) => (p.$mono ? "12px" : "15px")}/20px ${(p) => (p.$mono ? MONO_FONT : CJK_FONT)};
`;

const StatusBar = styled.footer`
  display: flex;
  align-items: center;
  justify-content: flex-end;
  gap: 12px;
  height: 28px;
  padding: 5px 176px 0 0;
  border-bottom: 2px solid #555;
  background: ${C.face};
  white-space: nowrap;
`;

/* ---------- layer properties dialog ---------- */

const Dialog = styled.section`
  position: absolute;
  top: 184px;
  left: 540px;
  width: 841px;
  border: 1px solid #666;
  background: ${C.face};
  box-shadow: 0 5px 22px rgba(0, 0, 0, 0.38);
`;
const DialogHead = styled.div`
  display: flex;
  align-items: center;
  justify-content: space-between;
  height: 38px;
  padding: 0 14px 2px 10px;
  background: #fff;
  color: #000;
`;
const DialogTitle = styled.h2`
  margin: 0;
  font: 15px/20px ${UI_FONT};
`;
const TabStrip = styled.div`
  display: flex;
  align-items: flex-end;
  height: 42px;
  padding: 0 11px;
`;
const Tab = styled.button<{ $w: number; $on?: boolean; $pad?: number }>`
  position: relative;
  width: ${(p) => p.$w}px;
  height: 28px;
  padding: 0 0 2px ${(p) => p.$pad ?? 8}px;
  border: 1px solid #d9d9d9;
  border-left-width: 0;
  background: #f0f0f0;
  text-align: left;
  white-space: nowrap;
  &:first-child { border-left-width: 1px; }
  ${(p) => p.$on && css`
    height: 31px;
    padding-bottom: 4px;
    border-bottom: 0;
    background: #fff;
  `}
`;
const Page = styled.div`
  display: flex;
  align-items: flex-start;
  gap: 3px;
  min-height: 562px;
  margin: -1px 11px 0 9px;
  padding-left: 4px;
  border: 1px solid #dcdcdc;
  background: #fff;
  color: #000;
`;
const LeftCol = styled.div`
  width: 161px;
  padding-top: 29px;
`;
const ShowLabel = styled.div`
  padding-left: 2px;
`;
const ShowBox = styled.div`
  display: flex;
  flex-direction: column;
  height: 254px;
  padding: 2px 3px 3px 1px;
  border: 1px solid ${C.edge};
`;
const ShowTree = styled.ul`
  flex: 1;
  overflow: hidden;
`;
const ShowGroup = styled.li`
  height: 20px;
  text-indent: -3px;
  font-weight: 700;
  white-space: nowrap;
`;
const ShowItem = styled.li<{ $last?: boolean }>`
  position: relative;
  height: 20px;
  padding-left: 16px;
  white-space: nowrap;
  &::before {
    content: "";
    position: absolute;
    top: 0;
    left: 4px;
    width: 11px;
    height: 10px;
    border: dotted #999;
    border-width: 0 0 1px 1px;
  }
  &::after {
    content: "";
    position: absolute;
    top: 10px;
    bottom: 0;
    left: 4px;
    border-left: ${(p) => (p.$last ? "0" : "1px dotted #999")};
  }
`;
const ShowText = styled.span<{ $on?: boolean }>`
  display: inline-block;
  padding: 0 2px;
  background: ${(p) => (p.$on ? "#eeeeee" : "none")};
`;
const MiniScroll = styled.div`
  display: flex;
  align-items: center;
  justify-content: space-between;
  height: 18px;
  padding: 0 4px;
  background: ${C.face};
`;
const MiniThumb = styled.div`
  width: 106px;
  height: 18px;
  background: #cdcdcd;
`;
const Preview = styled.svg`
  display: block;
  width: 160px;
  height: 112px;
  margin-top: 7px;
  stroke: #000;
  stroke-width: 4;
  stroke-linejoin: round;
`;
const RightCol = styled.div`
  width: 535px;
  padding-top: 38px;
`;
const HeadRow = styled.div`
  display: flex;
  gap: 6px;
  padding: 0 4px 0 7px;
`;
const Describe = styled.p`
  flex: 1;
  height: 27px;
  margin: 0;
  padding: 3px 0 0;
  border: solid #999;
  border-width: 1px 0 0 1px;
  font: 700 16px/20px ${CJK_FONT};
`;
const Push = styled.button<{ $w: number; $h?: number; $main?: boolean }>`
  display: flex;
  align-items: center;
  justify-content: center;
  width: ${(p) => p.$w}px;
  height: ${(p) => p.$h ?? 27}px;
  padding: 0 0 1px;
  border: ${(p) => (p.$main ? "2px solid #0078d7" : "1px solid #adadad")};
  background: #e1e1e1;
  white-space: nowrap;
  &:disabled { border-color: #bfbfbf; background: #cccccc; color: #909090; }
`;
const Groups = styled.div`
  display: flex;
  gap: 10px;
  margin-top: 3px;
`;
const Group = styled.fieldset`
  flex: 1;
  min-width: 0;
  height: 58px;
  margin: 0;
  padding: 3px 4px 0 9px;
  border: 1px solid #dcdcdc;
`;
const Legend = styled.legend`
  margin-left: -2px;
  padding: 0 2px;
`;
const RampButton = styled.button`
  display: flex;
  align-items: center;
  width: 248px;
  height: 30px;
  padding: 0 10px 0 4px;
  border: 1px solid #7a7a7a;
  background: #fff;
`;
const Ramp = styled.span`
  display: flex;
  flex: none;
  width: 217px;
  height: 20px;
  margin-right: 9px;
`;
const Stripe = styled.span<{ $c: string; $f: number }>`
  flex: ${(p) => p.$f};
  background: ${(p) => p.$c};
`;
const ListRow = styled.div`
  display: flex;
  gap: 9px;
  margin-top: 12px;
`;
const ListBox = styled.div`
  width: 493px;
  height: 250px;
  border: 1px solid ${C.edge};
`;
const Table = styled.table`
  width: 466px;
  table-layout: fixed;
  border-collapse: collapse;
  white-space: nowrap;
`;
const Th = styled.th<{ $w: number; $plain?: boolean }>`
  width: ${(p) => p.$w}px;
  height: 33px;
  padding: 0;
  text-align: left;
  font-weight: ${(p) => (p.$plain ? 400 : 700)};
`;
const ThText = styled.span`
  display: flex;
  align-items: center;
  height: 29px;
  padding: 0 0 2px 7px;
  border-right: 1px solid #e0e0e0;
`;
const Tr = styled.tr<{ $on?: boolean; $bold?: boolean }>`
  font-weight: ${(p) => (p.$bold ? 700 : 400)};
  ${(p) => p.$on && css`
    color: #fff;
    td + td { background: ${C.select}; }
  `}
`;
const Td = styled.td`
  height: 21px;
  padding: 0 0 1px 3px;
  line-height: 20px;
`;
const SymbolCell = styled.td`
  height: 21px;
  padding: 0 0 0 7px;
`;
const SymbolPair = styled.div`
  display: flex;
  gap: 1px;
`;
const MoveCol = styled.div`
  display: flex;
  flex-direction: column;
  gap: 11px;
  padding-top: 94px;
`;
const MoveButton = styled.button`
  display: grid;
  place-items: center;
  width: 27px;
  height: 27px;
  padding: 0;
  border: 1px solid #bfbfbf;
  background: #cccccc;
`;
const ButtonRow = styled.div`
  display: flex;
  gap: 10px;
  width: 529px;
  margin-top: 6px;
  padding-left: 1px;
`;
const Advanced = styled(Push)`
  justify-content: space-between;
  margin-left: auto;
  padding: 0 2px 1px 13px;
`;
const DialogFoot = styled.div`
  display: flex;
  justify-content: flex-end;
  gap: 10px;
  padding: 13px 8px 12px;
`;

const RAMP = ["#b6f8e6", "#f9b1fb", "#fcbfb3", "#fbfbb2", "#d2d4fa", "#b3f9b6", "#c1b3fa", "#fcebd3", "#fab3d5", "#b2e8fc", "#edcafa", "#dffbcb", "#fbd2da", "#fce4b3", "#b8fbcd", "#b4c2fb", "#cfe6fd"];

const TABS: [string, number, number?][] = [
  ["常规", 60], ["源", 60], ["选择", 60], ["显示", 59], ["符号系统", 79, 9], ["字段", 57, 5], ["定义查询", 75], ["标注", 60], ["连接和关联", 90], ["时间", 60], ["HTML 弹出窗口", 121],
];

const PreviewMap = () => (
  <Preview viewBox="46 226 478 334" preserveAspectRatio="none" role="img" aria-label="预览">
    <rect x="46" y="226" width="478" height="334" fill="#5d9fc0" stroke="none" />
    <path fill="#a04040" d="M40 220h180v27l-172-5z" />
    <path fill="#e0a0c0" d="M40 241l180 6-4 20 6 10-2 86-20-8-20 2-10-10-130-2z" />
    <path fill="#60e080" d="M220 220h100v26l-10 15 4 30 20 10 16 30-130 1z" />
    <path fill="#8060c0" d="M320 220h50l20 14 32 5 12 20 4 20-2 82-70 3-16-20 0-20-16-30-20-10-4-30 10-15z" />
    <path fill="#60c040" d="M366 228l24 8 34 4 14 25 6 5 10-20 30-16v-14H366zM500 240l30 5v135h-52l2-50-8-50 10-20z" />
    <path fill="#a8c8f0" d="M438 265l14-20 40-18 8 12-18 40-10 20 6 40-2 40-22 10-14-28z" />
    <path fill="#a06080" d="M40 345l130 2 10 10 20-2 20 8 10 30 14 68-100-4-66 1V420l-30-4z" />
    <path fill="#604080" d="M222 333l128-1 4 22 26 18 4 14-22 20-2 20-14 12-104 1-16-74z" />
    <path fill="#e060c0" d="M40 416l40 4v38l-4 2-6 100H40z" />
    <path fill="#60e080" d="M76 458l104 3 76 1 8 20 8 6v80H68l6-50z" />
    <path fill="#e0e080" d="M244 438h106l2 24 20 26 12 4 4 28 24 40H272v-74l-14-26z" />
    <path fill="#e06080" d="M378 364l60-3 12 32 6 100-6 36-18 24-24 4-22-40-4-24-18-14-14-22 4-22 14-12 2-20 18-14z" />
    <path fill="#40a080" d="M450 393l30-12 44-2v106l-12 18-14 6-12 12-34 4 4-30z" />
  </Preview>
);

const MoveArrow = ({ up }: { up?: boolean }) => (
  <svg width="18" height="20" viewBox="0 0 18 20">
    <g transform={up ? undefined : "rotate(180 9 10)"}>
      <path d="M9 2l8 8h-5v9H7v-9H2z" fill="#fff" opacity=".8" />
      <path d="M9 1l8 8h-5v9H6V9H1z" fill="#999" />
    </g>
  </svg>
);

const LayerProperties = () => (
  <Dialog role="dialog" aria-label="图层属性">
    <DialogHead>
      <DialogTitle>图层属性</DialogTitle>
      <PlainButton aria-label="关闭">
        <svg width="14" height="14" viewBox="0 0 14 14"><path d="M1 1l12 12M13 1L1 13" stroke="#000" strokeWidth="1.200" /></svg>
      </PlainButton>
    </DialogHead>
    <TabStrip role="tablist">
      {TABS.map(([t, w, pad]) => (
        <Tab key={t} role="tab" $w={w} $pad={pad} $on={t === "符号系统"} aria-selected={t === "符号系统"}>{t}</Tab>
      ))}
    </TabStrip>
    <Page role="tabpanel">
      <LeftCol>
        <ShowLabel>显示(S):</ShowLabel>
        <ShowBox>
          <ShowTree>
            <ShowGroup>要素</ShowGroup>
            <ShowGroup>类别</ShowGroup>
            <ShowItem><ShowText $on>唯一值</ShowText></ShowItem>
            <ShowItem><ShowText>唯一值，多个字段</ShowText></ShowItem>
            <ShowItem $last><ShowText>与样式中的符号匹配</ShowText></ShowItem>
            <ShowGroup>数量</ShowGroup>
            <ShowGroup>图表</ShowGroup>
            <ShowGroup>多个属性</ShowGroup>
          </ShowTree>
          <MiniScroll><Chevron dir="left" width={2.5} /><MiniThumb /><Chevron dir="right" width={2.5} /></MiniScroll>
        </ShowBox>
        <PreviewMap />
      </LeftCol>
      <RightCol>
        <HeadRow>
          <Describe>使用一个字段中的唯一值绘制类别。</Describe>
          <Push $w={73}>导入(I)...</Push>
        </HeadRow>
        <Groups>
          <Group>
            <Legend>值字段(V)</Legend>
            <ComboBox $w={248} $h={26}>
              <Select aria-label="值字段"><option>name</option></Select>
              <Chevron />
            </ComboBox>
          </Group>
          <Group>
            <Legend>色带(C)</Legend>
            <RampButton aria-label="色带" aria-haspopup="listbox">
              <Ramp>{RAMP.map((c, i) => <Stripe key={c} $c={c} $f={i === 0 ? 7 : i === 16 ? 21 : 12} />)}</Ramp>
              <Chevron />
            </RampButton>
          </Group>
        </Groups>
        <ListRow>
          <ListBox>
            <Table>
              <thead>
                <tr>
                  <Th $w={64} $plain><ThText>符号</ThText></Th>
                  <Th $w={170}><ThText>值</ThText></Th>
                  <Th $w={170}><ThText>标注</ThText></Th>
                  <Th $w={62}><ThText>计数</ThText></Th>
                </tr>
              </thead>
              <tbody>
                <Tr>
                  <SymbolCell>
                    <SymbolPair>
                      <Check $s={19} type="checkbox" aria-label="其他所有值" defaultChecked />
                      <Swatch $c={C.other} $w={37} $h={19} />
                    </SymbolPair>
                  </SymbolCell>
                  <Td>&lt;其他所有值&gt;</Td><Td>&lt;其他所有值&gt;</Td><Td>0</Td>
                </Tr>
                <Tr $bold><SymbolCell /><Td>&lt;标题&gt;</Td><Td>name</Td><Td>8</Td></Tr>
                {CONTINENTS.map(([n, c], i) => (
                  <Tr key={n} $on={i < 4}>
                    <SymbolCell><Swatch $c={c} $w={57} $h={19} /></SymbolCell>
                    <Td>{n}</Td><Td>{n}</Td><Td>1</Td>
                  </Tr>
                ))}
              </tbody>
            </Table>
          </ListBox>
          <MoveCol>
            <MoveButton aria-label="上移"><MoveArrow up /></MoveButton>
            <MoveButton aria-label="下移"><MoveArrow /></MoveButton>
          </MoveCol>
        </ListRow>
        <ButtonRow>
          <Push $w={102}>添加所有值(L)</Push>
          <Push $w={98}>添加值(D)...</Push>
          <Advanced $w={92}><span>高级(<u>N</u>)</span><svg width="8" height="5" viewBox="0 0 8 5"><path d="M0 0h8L4 5z" fill="#000" /></svg></Advanced>
        </ButtonRow>
      </RightCol>
    </Page>
    <DialogFoot>
      <Push $w={108} $h={36} $main>确定</Push>
      <Push $w={108} $h={36}>取消</Push>
      <Push $w={108} $h={36} disabled>应用(A)</Push>
    </DialogFoot>
  </Dialog>
);

/* ---------- context menu ---------- */

const Popup = styled.div`
  position: absolute;
  top: 509px;
  left: 918px;
  width: 249px;
  padding: 3px;
  border: 1px solid #c4c4c4;
  background: #f1f1f1;
  box-shadow: 4px 4px 4px rgba(0, 0, 0, 0.5);
`;
const PopupItem = styled.button<{ $on?: boolean }>`
  display: flex;
  align-items: center;
  justify-content: space-between;
  width: 100%;
  height: 27px;
  padding: 0 9px 1px 39px;
  border: 0;
  background: ${(p) => (p.$on ? "#91c9f7" : "none")};
  white-space: nowrap;
  &:disabled { color: #8a8a8a; }
`;
const PopupRule = styled.hr`
  height: 1px;
  margin: 6px 0 4px 35px;
  border: 0;
  background: #d4d4d4;
`;
const Callout = styled.div`
  position: absolute;
  top: 502px;
  left: 909px;
  width: 267px;
  height: 46px;
  border: 4px solid #e81f26;
`;

const MENU: (string | null)[][] = [
  ["分组值(G)", "on"], ["取消分组值(U)", "off"], ["反向排序(S)"], ["重置排序(T)", "off"], ["移除值(R)"], [null],
  ["翻转符号(F)"], ["所选符号的属性(S)..."], ["所有符号的属性(A)..."], [null],
  ["应用配色方案(A)"], ["编辑描述(E)...", "off"], ["移动至标题", "sub"],
];

const ContextMenu = () => (
  <>
    <Popup role="menu">
      {MENU.map(([t, k], i) =>
        t === null ? <PopupRule key={i} /> : (
          <PopupItem key={i} role="menuitem" $on={k === "on"} disabled={k === "off"}>
            {t}{k === "sub" && <Chevron dir="right" />}
          </PopupItem>
        )
      )}
    </Popup>
    <Callout />
  </>
);

export default function App() {
  return (
    <Window>
      <GlobalStyle />
      <TitleBar>
        <Icon name="logo" size={20} />
        <WindowTitle>无标题 - ArcMap</WindowTitle>
        <CaptionButton aria-label="最小化"><svg width="12" height="12" viewBox="0 0 12 12"><path d="M0 6.500h12" stroke="#888" /></svg></CaptionButton>
        <CaptionButton aria-label="还原"><svg width="12" height="12" viewBox="0 0 12 12"><path d="M.5 3.500h8v8h-8zM3.500 3V.5h8v8H9" stroke="#888" fill="none" /></svg></CaptionButton>
        <CaptionButton aria-label="关闭窗口"><svg width="12" height="12" viewBox="0 0 12 12"><path d="M0 0l12 12M12 0L0 12" stroke="#888" /></svg></CaptionButton>
      </TitleBar>
      <HiddenEdge />
      <MenuBar>
        {["文件(F)", "编辑(E)", "视图(V)", "书签(B)", "插入(I)", "选择(S)", "地理处理(G)", "自定义(C)", "窗口(W)", "帮助(H)"].map((m) => (
          <MenuEntry key={m}>{m}</MenuEntry>
        ))}
      </MenuBar>

      <ToolRow>
        <Bar>
          <Grip />
          <Tools items="new open save print | cut copy paste del | undo redo | add v |" />
          <ComboBox $w={184} $h={24}>
            <Select $mono aria-label="比例尺"><option>1:131,456,749</option></Select>
            <Chevron />
          </ComboBox>
          <Tools items="| sketch | table catalog search toolbox python | model" active={["sketch"]} />
          <OverflowGlyph />
        </Bar>
        <Bar>
          <Grip />
          <BarMenu>编辑器(R)</BarMenu>
          <Tools items="v | play playA | lineSeg arc trace w burst | reshape cutPoly split splitX rotate | attrs props | form" />
          <OverflowGlyph />
        </Bar>
        <Bar>
          <Grip />
          <Tools items="building | polyCursor w | poly polyEdit align steps | poly | polyCheck boxCheck | cursorX listX" />
          <OverflowGlyph />
        </Bar>
        <Bar>
          <Grip />
          <BarMenu>捕捉(S)</BarMenu>
          <Tools items="v snapPoint snapEnd snapVertex snapEdge" active={["snapPoint", "snapEnd", "snapVertex", "snapEdge"]} />
          <OverflowGlyph />
        </Bar>
      </ToolRow>
      <ToolRowLast>
        <Bar>
          <Grip />
          <Tools
            items="zoomIn zoomOut hand globe | arrowsIn arrowsOut | back fwd | selFeat v clearSel | cursor | info flash popup | measure | find route xy | time | viewer"
            active={["hand"]}
          />
          <ComboBox $w={223} $h={24}>
            <SunkenSelect disabled aria-label="查看器"><option></option></SunkenSelect>
            <svg width="18" height="18" viewBox="0 0 18 18"><path d="M1 17h16V1" stroke="#999" fill="none" /><path d="M4 7h9l-4.500 5z" fill="#999" /></svg>
          </ComboBox>
          <OverflowGlyph />
        </Bar>
        <Bar>
          <Grip />
          <Tools items="pzIn pzOut pHand pFull pOne | pIn pOut | pBack pFwd" />
          <ComboBox $w={75} $h={24}>
            <Select $mono $tone="#c9c9c9" aria-label="页面缩放"><option>100%</option></Select>
            <Chevron color="#aaa" />
          </ComboBox>
          <Tools items="| draft pFocus swap pages" active={["draft"]} />
          <OverflowGlyph />
        </Bar>
        <Bar>
          <Grip />
          <Tools items="eBox eCurve eExtend eTrim eCross | eExplode eBall | align ePage eWrench eBand eGrid | eUnion eBuffer" />
          <OverflowGlyph />
        </Bar>
      </ToolRowLast>

      <Main>
        <ContentsPanel />
        <MapPane>
          <MapCanvas><WorldMap /></MapCanvas>
          <VScroll><Chevron dir="up" width={2} /><Thumb $v /><Chevron dir="down" width={2} /></VScroll>
          <HScroll>
            <ViewButtons>
              <ViewButton $on aria-label="数据视图"><Icon name="dataView" size={12} /></ViewButton>
              <ViewButton aria-label="布局视图"><Icon name="layoutView" size={12} /></ViewButton>
              <Sep />
              <ViewButton aria-label="刷新"><Icon name="refresh" size={13} /></ViewButton>
              <ViewButton aria-label="暂停绘制"><Icon name="pause" size={12} /></ViewButton>
            </ViewButtons>
            <Chevron dir="left" width={2} /><Thumb /><Chevron dir="right" width={2} />
          </HScroll>
        </MapPane>
        <Dock>
          <DockTab><Icon name="results" size={20} />结果</DockTab>
          <DockTab $mono><Icon name="toolbox" size={20} />ArcToolbox</DockTab>
          <DockTab><Icon name="catalog" size={20} />目录</DockTab>
          <DockTab><Icon name="search" size={20} />搜索</DockTab>
        </Dock>
      </Main>
      <StatusBar><span>-195.81</span><span>50.194 十进制度</span></StatusBar>

      <LayerProperties />
      <ContextMenu />
    </Window>
  );
}
